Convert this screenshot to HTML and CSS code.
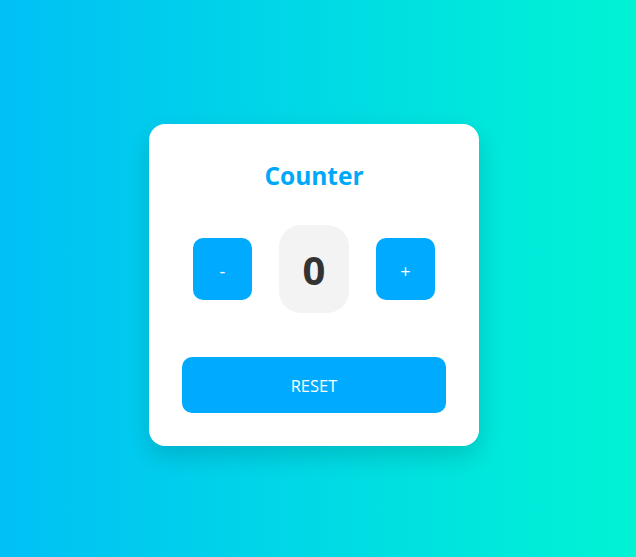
FILE: index.html
```html
<!DOCTYPE html>
<html lang="en">
<head>
<meta charset="utf-8">
<title>Counter</title>
<link rel="stylesheet" href="styles.css">
</head>
<body>
  <main class="card">
    <h1 class="title">Counter</h1>
    <div class="row">
      <button class="btn step">-</button>
      <div class="count">0</div>
      <button class="btn step">+</button>
    </div>
    <button class="btn reset">RESET</button>
  </main>
</body>
</html>
```
FILE: styles.css
```css
* { box-sizing: border-box; }
html, body { height: 100%; }
body {
  margin: 0;
  padding: 13px 8px 0 0;
  font-family: "Open Sans", "Noto Sans", sans-serif;
  background: linear-gradient(90deg, #00c0f6 0%, #00f3d4 100%);
  display: flex;
  align-items: center;
  justify-content: center;
}
.card {
  width: 330px;
  background: #fff;
  border-radius: 16px;
  padding: 36px 33px 33px;
  box-shadow: 0 10px 25px rgba(0, 0, 0, 0.15);
  display: flex;
  flex-direction: column;
  align-items: stretch;
}
.title {
  margin: 0;
  font-size: 24.5px;
  line-height: 32px;
  font-weight: 700;
  color: #00a8f8;
  text-align: center;
}
.row {
  margin-top: 33px;
  display: flex;
  justify-content: center;
  align-items: center;
  gap: 27px;
}
.btn {
  border: none;
  background: #00aaff;
  color: #fff;
  font-family: inherit;
  font-size: 16.5px;
  cursor: pointer;
  padding: 0;
}
.step {
  width: 59px;
  height: 62px;
  border-radius: 10px;
  font-size: 18px;
  padding-top: 3px;
}
.count {
  width: 70px;
  height: 88px;
  border-radius: 22px;
  background: #f3f3f3;
  color: #333;
  font-size: 40px;
  font-weight: 700;
  display: flex;
  align-items: center;
  justify-content: center;
}
.reset {
  margin-top: 44px;
  height: 56px;
  border-radius: 10px;
}
```
